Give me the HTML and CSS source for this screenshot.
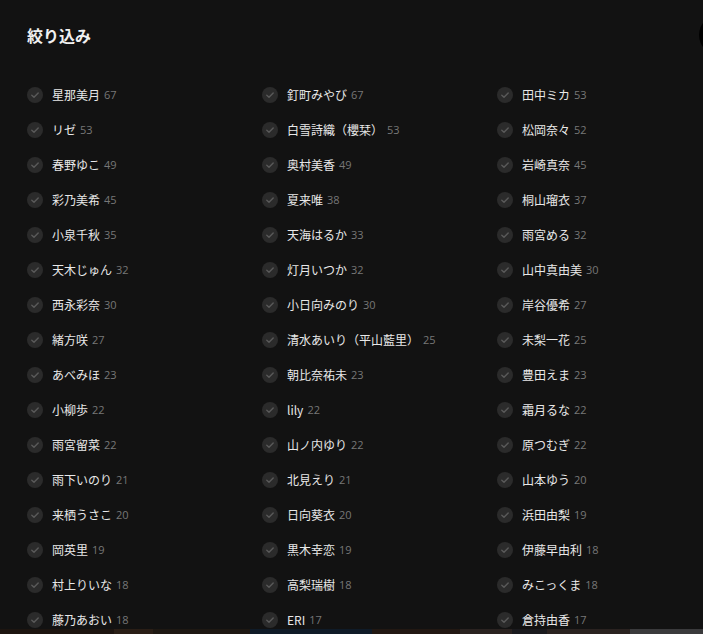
FILE: index.html
```html
<!DOCTYPE html>
<html lang="ja">
<head>
<meta charset="utf-8">
<link rel="stylesheet" href="styles.css">
</head>
<body>
<div class="modal">
  <h2 class="title">絞り込み</h2>
  <ul class="grid" id="grid"></ul>
  <div class="close"></div>
</div>
<div class="strip">
  <span class="s1"></span><span class="s2"></span><span class="s3"></span><span class="s4"></span><span class="s5"></span><span class="s6"></span><span class="s7"></span><span class="s8"></span><span class="s9"></span>
</div>
<script src="app.js"></script>
</body>
</html>
```
FILE: app.js
```js
const items = [
["星那美月",67],["釘町みやび",67],["田中ミカ",53],
["リゼ",53],["白雪詩織（櫻栞）",53],["松岡奈々",52],
["春野ゆこ",49],["奥村美香",49],["岩崎真奈",45],
["彩乃美希",45],["夏来唯",38],["桐山瑠衣",37],
["小泉千秋",35],["天海はるか",33],["雨宮める",32],
["天木じゅん",32],["灯月いつか",32],["山中真由美",30],
["西永彩奈",30],["小日向みのり",30],["岸谷優希",27],
["緒方咲",27],["清水あいり（平山藍里）",25],["未梨一花",25],
["あべみほ",23],["朝比奈祐未",23],["豊田えま",23],
["小柳歩",22],["lily",22],["霜月るな",22],
["雨宮留菜",22],["山ノ内ゆり",22],["原つむぎ",22],
["雨下いのり",21],["北見えり",21],["山本ゆう",20],
["来栖うさこ",20],["日向葵衣",20],["浜田由梨",19],
["岡英里",19],["黒木幸恋",19],["伊藤早由利",18],
["村上りいな",18],["高梨瑞樹",18],["みこっくま",18],
["藤乃あおい",18],["ERI",17],["倉持由香",17]
];
const grid = document.getElementById('grid');
const check = '<svg viewBox="0 0 16 16" width="16" height="16"><circle cx="8" cy="8" r="8" fill="#2b2b2b"/><path d="M4.8 8.2 L7 10.3 L11.2 5.9" fill="none" stroke="#5a5a5a" stroke-width="1.4" stroke-linecap="round" stroke-linejoin="round"/></svg>';
for (const [n,c] of items) {
  const li = document.createElement('li');
  li.className = 'item';
  li.innerHTML = '<span class="chk">'+check+'</span><span class="name">'+n+'</span><span class="count">'+c+'</span>';
  grid.appendChild(li);
}
```
FILE: styles.css
```css
html, body {
  margin: 0;
  padding: 0;
  background: #121212;
  overflow: hidden;
}
body {
  width: 703px;
  height: 634px;
  position: relative;
  font-family: "Noto Sans CJK JP", "Noto Sans", sans-serif;
  color: #e6e6e6;
}
.modal {
  position: relative;
  height: 629px;
  padding: 0 0 0 27px;
  box-sizing: border-box;
  overflow: hidden;
}
.title {
  margin: 0;
  padding-top: 24px;
  font-size: 16px;
  line-height: 22px;
  font-weight: 700;
  color: #f0f0f0;
}
.grid {
  list-style: none;
  margin: 0;
  padding: 0;
  margin-top: 31px;
  display: grid;
  grid-template-columns: 235px 235px 210px;
  grid-auto-rows: 35px;
}
.item {
  display: flex;
  align-items: center;
  height: 35px;
}
.chk {
  width: 16px;
  height: 16px;
  display: flex;
  margin-right: 9px;
}
.name {
  font-size: 12px;
  color: #e8e8e8;
  line-height: 16px;
}
.count {
  font-size: 11px;
  color: #777;
  margin-left: 4px;
  line-height: 16px;
  font-family: "Open Sans", "Noto Sans", sans-serif;
}
.close {
  position: absolute;
  left: 699px;
  top: 15px;
  width: 40px;
  height: 40px;
  border-radius: 50%;
  background: #000;
}
.strip {
  display: flex;
  height: 5px;
}
.strip span { display: block; height: 5px; }
.s1 { width: 130px; background: #1d1510; }
.s2 { width: 45px; background: #2a1e16; }
.s3 { width: 110px; background: #1e1812; }
.s4 { width: 140px; background: #0f1b28; }
.s5 { width: 100px; background: #221812; }
.s6 { width: 60px; background: #2a2220; }
.s7 { width: 40px; background: #1a1a1e; }
.s8 { width: 95px; background: #2a2220; }
.s9 { width: 83px; background: #3a3a3c; }
```
